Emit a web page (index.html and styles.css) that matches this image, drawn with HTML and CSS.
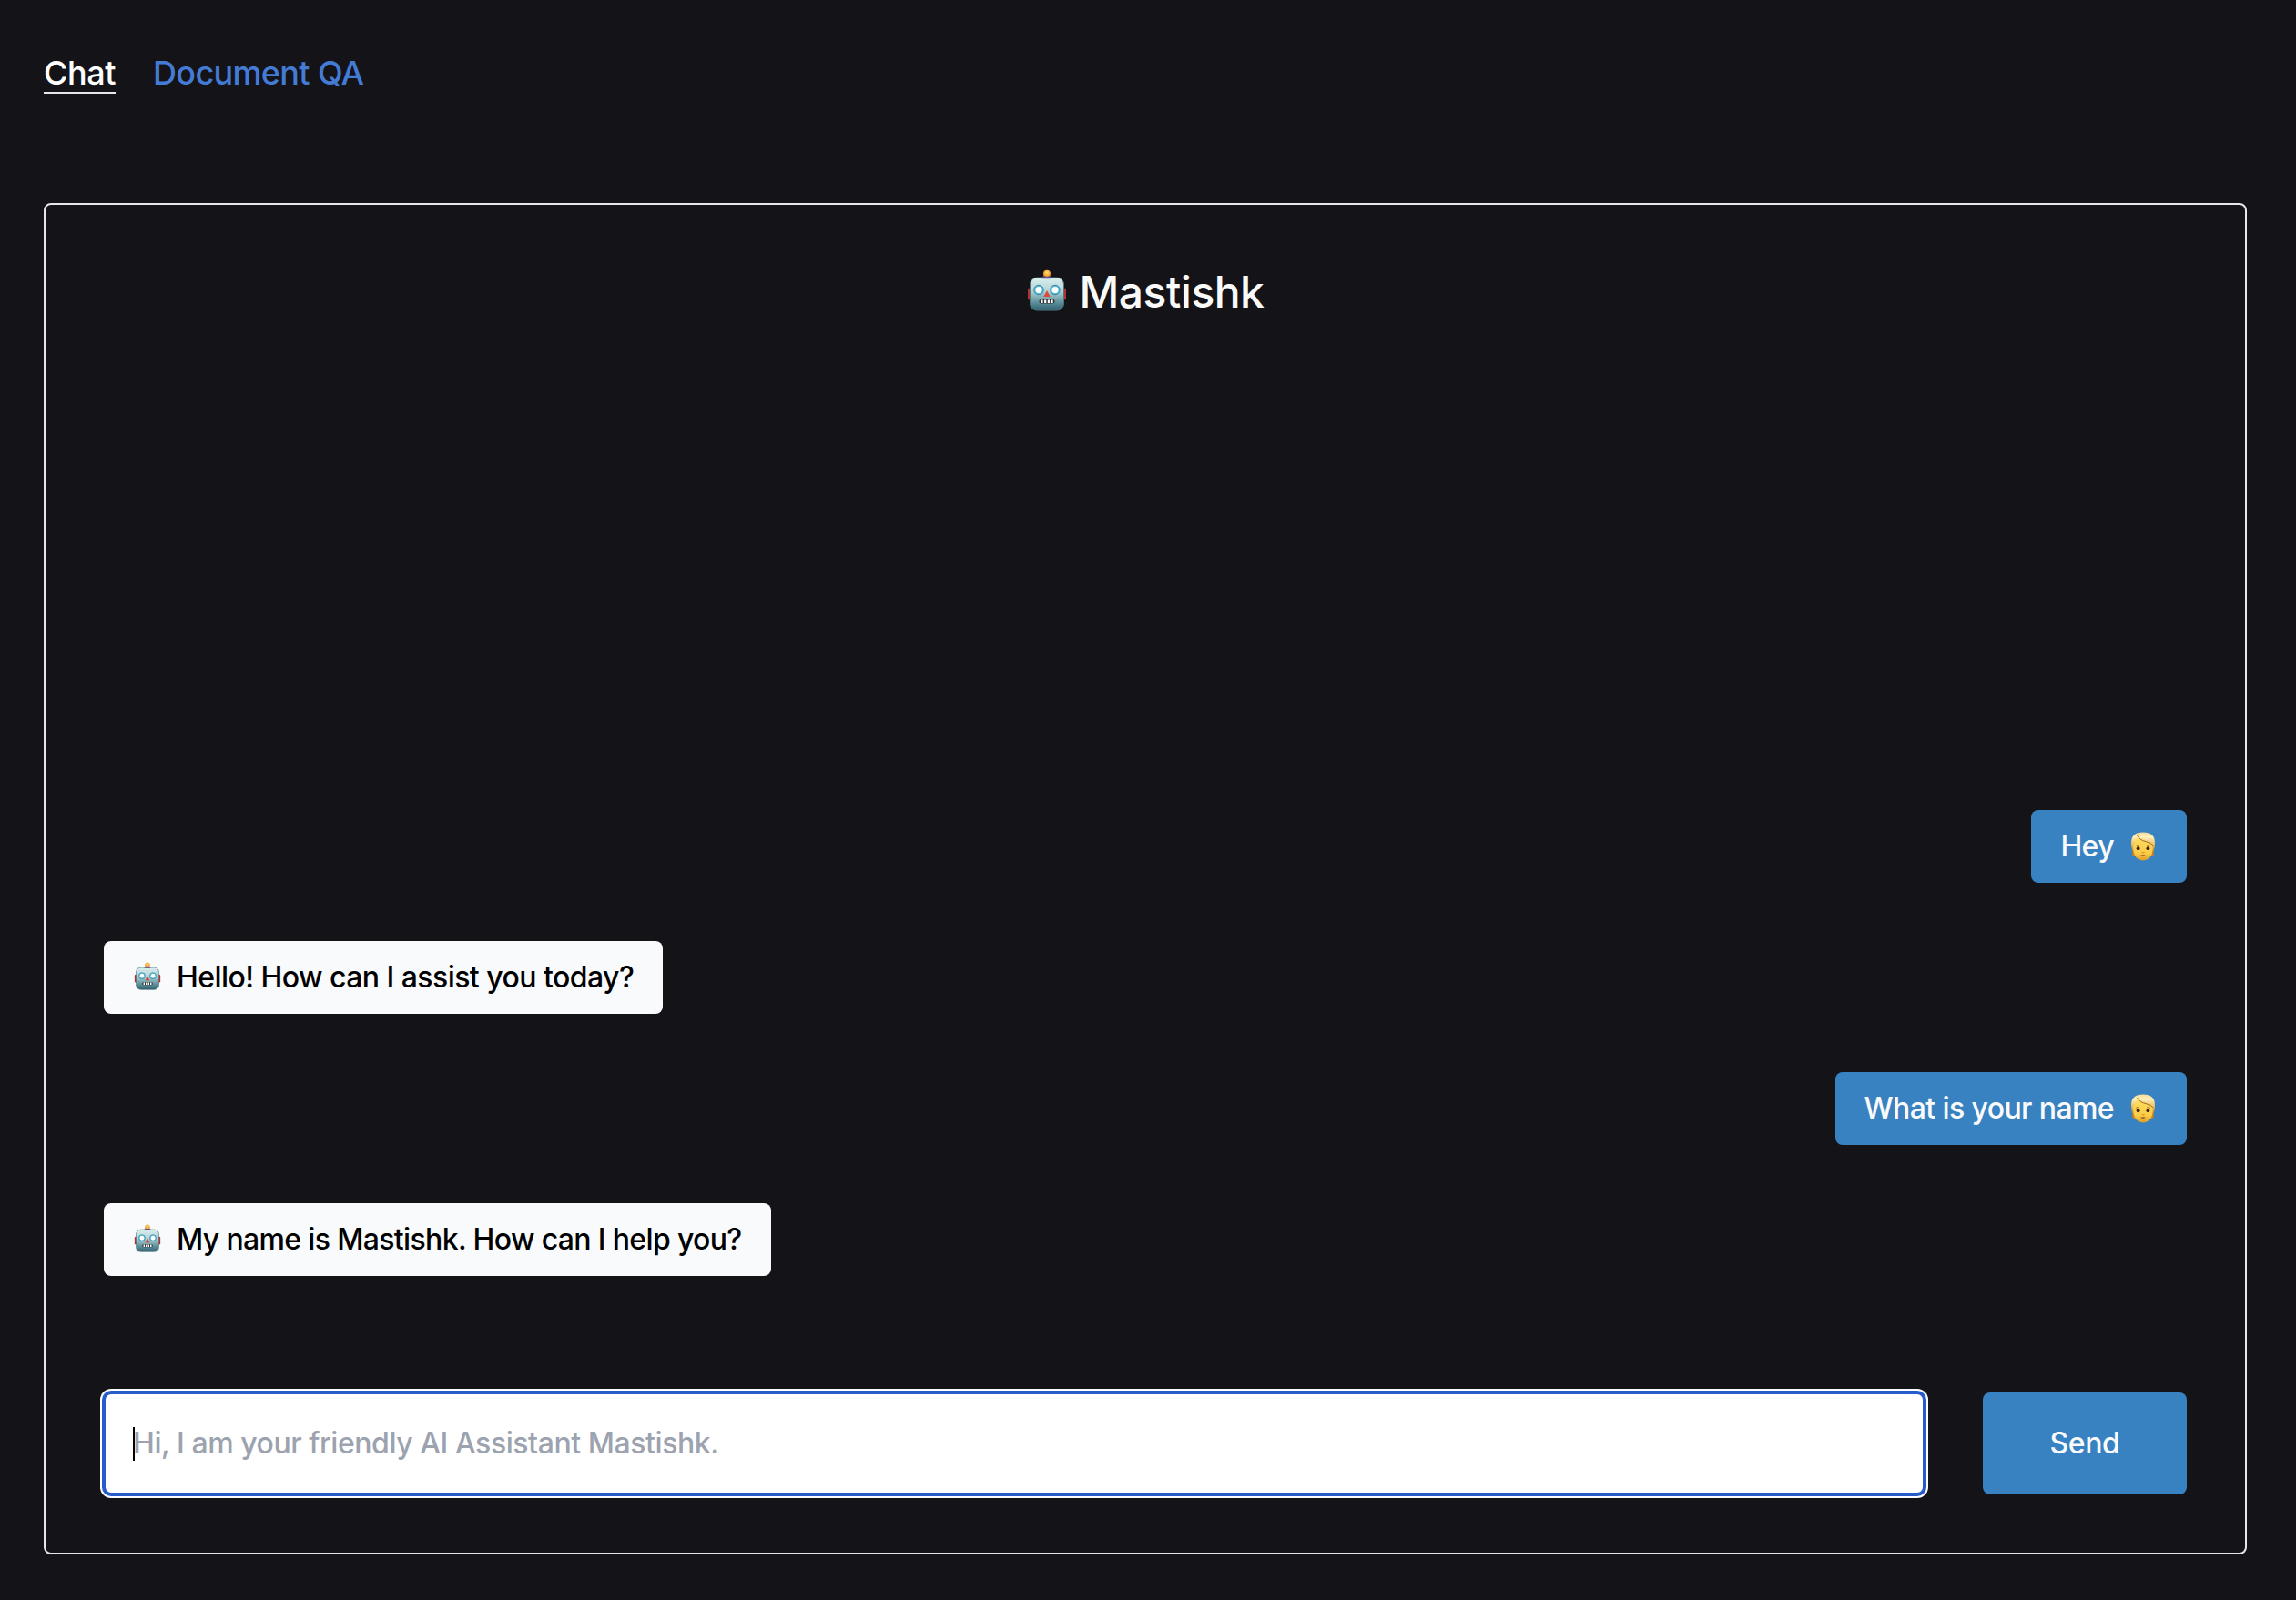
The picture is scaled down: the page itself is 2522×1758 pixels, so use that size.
FILE: index.html
```html
<!DOCTYPE html>
<html lang="en">
<head>
<meta charset="utf-8">
<title>Mastishk</title>
<link rel="stylesheet" href="styles.css">
</head>
<body>
<svg width="0" height="0" class="defs" aria-hidden="true">
  <defs>
    <linearGradient id="metal" x1="0" y1="0" x2="0" y2="1">
      <stop offset="0" stop-color="#d9efed"/><stop offset=".4" stop-color="#b5d3d6"/><stop offset=".75" stop-color="#5f929d"/><stop offset="1" stop-color="#2f5f6d"/>
    </linearGradient>
    <radialGradient id="bulb" cx=".5" cy=".35" r=".6">
      <stop offset="0" stop-color="#ffe07a"/><stop offset="1" stop-color="#ef8a13"/>
    </radialGradient>
    <linearGradient id="skin" x1="0" y1="0" x2="0" y2="1">
      <stop offset="0" stop-color="#ffdd62"/><stop offset=".7" stop-color="#fbcb45"/><stop offset="1" stop-color="#dd9c25"/>
    </linearGradient>
    <linearGradient id="hair" x1="0" y1="0" x2="0" y2="1">
      <stop offset="0" stop-color="#f6dc95"/><stop offset=".25" stop-color="#fff0bd"/><stop offset=".6" stop-color="#eec465"/><stop offset="1" stop-color="#c58a2c"/>
    </linearGradient>
  </defs>
  <symbol id="robot" viewBox="0 0 44 46">
    <rect x="1" y="20.500" width="5" height="13" rx="2" fill="#b5312f"/>
    <rect x="38" y="20.500" width="5" height="13" rx="2" fill="#b5312f"/>
    <circle cx="22" cy="4.800" r="4" fill="url(#bulb)"/>
    <rect x="3.500" y="9" width="37" height="36" rx="7.500" fill="url(#metal)" stroke="#4d7781" stroke-width="1"/>
    <path d="M17 10.200Q16.500 7 19 7q3 1.800 6 0 2.500 0 2 3.200z" fill="#5d4a86"/>
    <circle cx="13" cy="22.500" r="5.200" fill="#5fc0dd" stroke="#2b87a8" stroke-width="1"/>
    <circle cx="31" cy="22.500" r="5.200" fill="#5fc0dd" stroke="#2b87a8" stroke-width="1"/>
    <circle cx="13" cy="22.500" r="3.500" fill="#fff"/>
    <circle cx="31" cy="22.500" r="3.500" fill="#fff"/>
    <path d="M22 23l3.700 7h-7.400z" fill="#dc4a3d"/>
    <rect x="13.500" y="33" width="17" height="4.500" rx="2" fill="#2c2f33"/>
    <path d="M16.500 33.500v3.500M20.200 33.500v3.500M23.900 33.500v3.500M27.600 33.500v3.500" stroke="#fff" stroke-width="2.200"/>
  </symbol>
  <symbol id="person" viewBox="0 0 26 32">
    <path d="M1.500 20Q.5 25 2 26.500 4 27.500 6 26V16zM24.500 20q1 5-.5 6.500-2 1-4-.5V16z" fill="#c08427"/>
    <path d="M0 12Q0 .5 13 .5T26 12Q26 17 24.700 21H1.300Q0 17 0 12z" fill="url(#hair)"/>
    <path d="M7 6Q3.500 11 2.300 14 1.500 26 7.500 29.800q5.500 3.400 11 0Q24.500 26 23.700 14 22 11.500 17 10.500 11 9.500 7 6z" fill="url(#skin)"/>
    <path d="M6.500 4Q10 9.500 16.500 10.700 22 12 24 15" fill="none" stroke="#9c6620" stroke-width="1"/>
    <path d="M4.800 15.500q2-1.500 4-.5M17.200 15q2-1 4 .5" fill="none" stroke="#97671c" stroke-width=".9"/>
    <circle cx="7.600" cy="18.200" r="1.900" fill="#36240d"/>
    <circle cx="18.400" cy="18.200" r="1.900" fill="#36240d"/>
    <path d="M11.500 22.500q1.500 1 3 0" fill="none" stroke="#c98a20" stroke-width="1"/>
    <path d="M10 25.800q3-1.300 6 0-3 2-6 0z" fill="#8f4519"/>
  </symbol>
</svg>
<nav class="nav">
  <a class="tab tab-active">Chat</a>
  <a class="tab">Document QA</a>
</nav>
<main class="panel">
  <h1 class="title"><svg class="title-icon"><use href="#robot"/></svg><span>Mastishk</span></h1>
  <section class="messages">
    <div class="msg user"><span>Hey</span><svg class="face"><use href="#person"/></svg></div>
    <div class="msg bot greeting"><svg class="robot"><use href="#robot"/></svg><span>Hello! How can I assist you today?</span></div>
    <div class="msg user"><span>What is your name</span><svg class="face"><use href="#person"/></svg></div>
    <div class="msg bot"><svg class="robot"><use href="#robot"/></svg><span>My name is Mastishk. How can I help you?</span></div>
  </section>
  <div class="composer">
    <div class="field"><i class="caret"></i><span>Hi, I am your friendly AI Assistant Mastishk.</span></div>
    <button class="send">Send</button>
  </div>
</main>
</body>
</html>
```
FILE: styles.css
```css
* { box-sizing: border-box; }
body {
  margin: 0;
  height: 1758px;
  padding: 54px 54px 50px 48px;
  display: flex;
  flex-direction: column;
  background: #141318;
  color: #fafafa;
  font: 450 32px/48px Inter, "Liberation Sans", sans-serif;
}
.defs { position: absolute; }
.nav { display: flex; gap: 41px; height: 169px; font-size: 36px; }
.tab { height: 49px; color: #447bd4; line-height: 52px; letter-spacing: -0.65px; }
.tab-active { color: #fff; border-bottom: 2px solid #e5e7eb; letter-spacing: -0.45px; }
.panel {
  flex: 1;
  display: flex;
  flex-direction: column;
  border: 2px solid #e5e7eb;
  border-radius: 8px;
  padding: 64px;
}
.title {
  margin: 0;
  display: flex;
  justify-content: center;
  align-items: center;
  gap: 14px;
  height: 64px;
  font-size: 48px;
  font-weight: 450;
  line-height: 64px;
  letter-spacing: -0.5px;
}
.title-icon { width: 44px; height: 46px; margin-top: -4px; }
.messages {
  flex: 1;
  display: flex;
  flex-direction: column;
  justify-content: flex-end;
  gap: 64px;
  padding-bottom: 128px;
}
.msg {
  display: flex;
  align-items: center;
  height: 80px;
  padding: 0 32px;
  border-radius: 8px;
  letter-spacing: -0.65px;
}
.user { align-self: flex-end; background: #3882c2; gap: 19px; letter-spacing: -0.6px; }
.bot { align-self: flex-start; background: #f9fafc; color: #000; gap: 17px; }
.greeting { letter-spacing: -0.55px; }
.face { width: 26px; height: 32px; margin-right: 3px; }
.robot { width: 30px; height: 31px; margin: -3px 0 0 1px; }
.composer { display: flex; gap: 64px; height: 112px; }
.field {
  flex: 1;
  display: flex;
  align-items: center;
  padding: 0 30px;
  background: #fff;
  color: #9ca3af;
  border: 2px solid #265dcb;
  border-radius: 8px;
  box-shadow: 0 0 0 2px #265dcb, 0 0 0 4px #fff;
  letter-spacing: -0.44px;
}
.caret { width: 2px; height: 37px; margin-right: -2px; background: #000; }
.send {
  width: 224px;
  border: 0;
  border-radius: 8px;
  background: #3882c2;
  color: #fafafa;
  font: inherit;
  letter-spacing: -0.35px;
}
```
